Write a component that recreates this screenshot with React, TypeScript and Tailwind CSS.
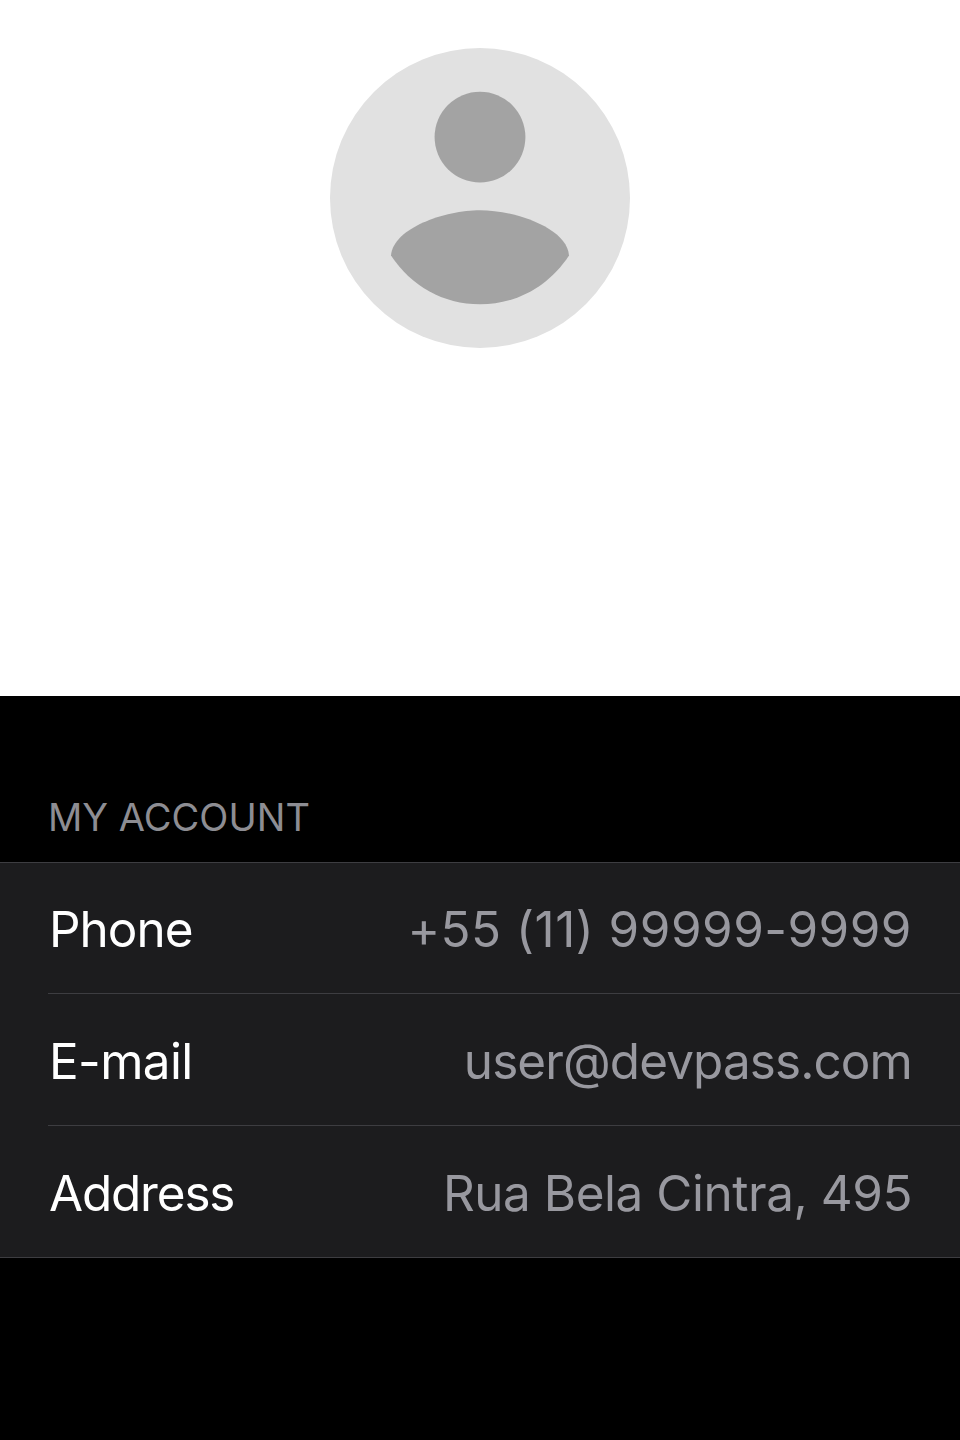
const rows = [
  { label: "Phone", value: "+55 (11) 99999-9999", row: "h-[131px] border-b pt-px", labelStyle: "tracking-[-0.95px] pl-px", valueStyle: "tracking-[0.5px]" },
  { label: "E-mail", value: "user@devpass.com", row: "h-[132px] border-b pt-[3px]", labelStyle: "tracking-[-0.6px] pl-px", valueStyle: "tracking-[-0.87px]" },
  { label: "Address", value: "Rua Bela Cintra, 495", row: "h-[131px] pt-[3px]", labelStyle: "tracking-[-1.15px] pl-px", valueStyle: "tracking-[-0.43px]" },
];

export default function App() {
  return (
    <main className="flex h-[1440px] w-[960px] flex-col bg-black font-['Inter',sans-serif]">
      <header className="flex h-[696px] shrink-0 justify-center bg-white pt-12">
        <svg className="size-[300px]" viewBox="0 0 300 300" aria-hidden="true">
          <circle cx="150" cy="150" r="150" fill="#e1e1e1" />
          <circle cx="150" cy="89.1" r="45.4" fill="#a3a3a3" />
          <path d="M61 207.5C63 180 115 162.2 150 162.2S237 180 239 207.5C219 238 187 256.3 150 256.3S81 238 61 207.5Z" fill="#a3a3a3" />
        </svg>
      </header>
      <section>
        <h2 className="flex h-[166px] items-end px-12 pb-[21px] text-[38px] leading-[48px] tracking-[0.02px] text-[#8d8d93]">MY ACCOUNT</h2>
        <ul className="border-y border-[#3d3d41] bg-[#1c1c1e] pl-12 text-[49.4px] leading-[60px]">
          {rows.map((r) => (
            <li key={r.label} className={`flex items-center justify-between border-[#3d3d41] pr-12 ${r.row}`}>
              <span className={`text-white ${r.labelStyle}`}>{r.label}</span>
              <span className={`text-[#98989f] ${r.valueStyle}`}>{r.value}</span>
            </li>
          ))}
        </ul>
      </section>
    </main>
  );
}
